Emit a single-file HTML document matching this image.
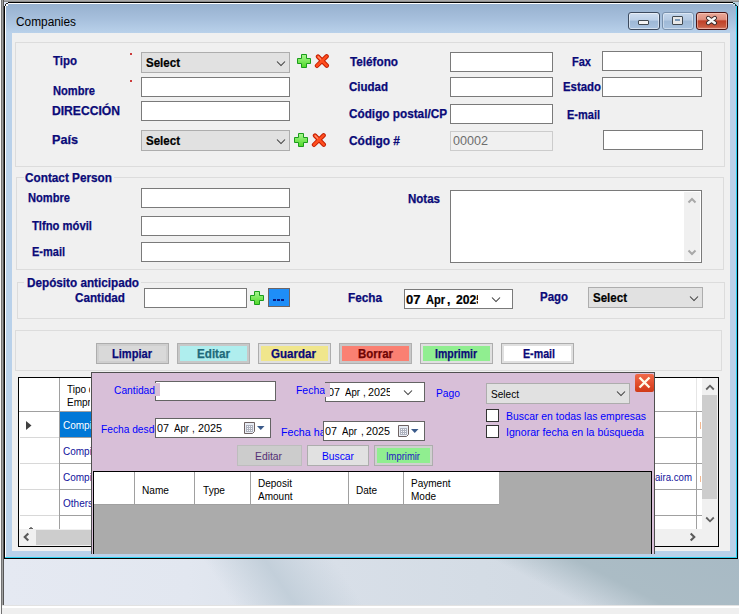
<!DOCTYPE html>
<html><head><meta charset="utf-8"><style>*{margin:0;padding:0;box-sizing:border-box}
html,body{width:739px;height:614px;overflow:hidden;position:relative;background:#efefef}
body div,body span,body svg{position:absolute}
span{white-space:nowrap;font-family:"Liberation Sans",sans-serif;font-size:12px;line-height:12px;transform-origin:0 0}
.lb{font-weight:bold;color:#0a0a78;-webkit-text-stroke:0.25px currentColor}
.cb{font-weight:bold;color:#000;-webkit-text-stroke:0.2px currentColor}
.dis{color:#6d6d6d}
.tt{color:#000}
.rg{color:#000;font-size:11.5px}
.bl{color:#12129c;font-size:11.5px}
.pb{color:#0000ff;font-size:11.5px}
</style></head><body>
<div style="left:4px;top:559px;width:735px;height:46px;background:linear-gradient(27deg,rgba(171,188,197,0) 0%,rgba(171,188,197,0) 70%,rgba(171,188,197,1) 80%,#a8bac5 100%),linear-gradient(56deg,rgba(192,205,216,0) 30%,rgba(192,205,216,.9) 38%,rgba(192,205,216,0) 47%),linear-gradient(90deg,#e5e9f2 0%,#e2e7f0 25%,#d8dfe8 45%,#d4dce5 65%,#cdd6df 100%)"></div>
<div style="left:2px;top:605px;width:737px;height:1px;background:#e2e2e2"></div>
<div style="left:2px;top:606px;width:737px;height:2px;background:#fff"></div>
<div style="left:0px;top:0px;width:1px;height:614px;background:#f8f8f8"></div>
<div style="left:1px;top:0px;width:1px;height:614px;background:#727272"></div>
<div style="left:2px;top:0px;width:1px;height:605px;background:#a0a0a0"></div>
<div style="left:3px;top:0px;width:1px;height:605px;background:#555"></div>
<div style="left:4px;top:0px;width:735px;height:1px;background:#a9a9a9"></div>
<div style="left:4px;top:1px;width:735px;height:1px;background:#8c8c8c"></div>
<div style="left:4px;top:2px;width:734px;height:557px;background:#000"></div>
<div style="left:5px;top:3px;width:732px;height:555px;background:#fff"></div>
<div style="left:6px;top:4px;width:731px;height:553px;background:#b9d1ea"></div>
<div style="left:736px;top:4px;width:1px;height:554px;background:#2ad0f0"></div>
<div style="left:5px;top:557px;width:732px;height:1px;background:#2ad0f0"></div>
<div style="left:6px;top:4px;width:730px;height:29px;background:linear-gradient(180deg,#97b1cf 0%,#a6bfdc 50%,#b9d1ea 100%)"></div>
<div style="left:738px;top:2px;width:1px;height:557px;background:#d5e2f2"></div>
<div style="left:733px;top:2px;width:6px;height:4px;background:#b9cfdf"></div>
<div style="left:733px;top:3px;width:2px;height:1px;background:#1a3a40"></div>
<div style="left:735px;top:4px;width:1px;height:2px;background:#1a3a40"></div>
<div style="left:734px;top:4px;width:1px;height:1px;background:#c8f0f8"></div>
<div style="left:736px;top:5px;width:1px;height:1px;background:#203838"></div>
<div style="left:737px;top:6px;width:1px;height:3px;background:#000"></div>
<div style="left:4px;top:2px;width:4px;height:4px;background:#dfe7f6"></div>
<div style="left:5px;top:4px;width:1px;height:2px;background:#222"></div>
<div style="left:6px;top:3px;width:2px;height:1px;background:#222"></div>
<div style="left:6px;top:4px;width:2px;height:2px;background:#ffffff"></div>
<div style="left:628px;top:12px;width:32px;height:18px;border:1px solid #3c4a5e;border-radius:3px;background:linear-gradient(180deg,#d0def0 0%,#bcd0e8 45%,#9db8d6 50%,#a9c3e0 100%);box-shadow:inset 0 0 0 1px rgba(255,255,255,.5)"></div>
<div style="left:638px;top:20px;width:11px;height:5px;background:#f4f4f4;border:1px solid #404850;border-radius:1px"></div>
<div style="left:662px;top:12px;width:32px;height:18px;border:1px solid #7890ac;border-radius:3px;background:linear-gradient(180deg,#c4d6ec 0%,#b4c9e2 45%,#9fb9d6 50%,#a9c3e0 100%);box-shadow:inset 0 0 0 1px rgba(255,255,255,.4)"></div>
<div style="left:672px;top:16px;width:11px;height:9px;background:#e8e8e8;border:1px solid #404850;border-radius:1px"></div>
<div style="left:675px;top:19px;width:5px;height:2px;background:#7a98b8;border:0"></div>
<div style="left:696px;top:12px;width:32px;height:18px;border:1px solid #4a1414;border-radius:3px;background:linear-gradient(180deg,#eaa898 0%,#e09080 40%,#c04028 50%,#c85a40 85%,#d88070 100%);box-shadow:inset 0 0 0 1px rgba(255,220,210,.5)"></div>
<svg style="left:705px;top:15px" width="13" height="11" viewBox="0 0 13 11"><path d="M3.2 3 L9.8 8 M9.8 3 L3.2 8" stroke="#3a2828" stroke-width="4.4" stroke-linecap="round"/><path d="M3.2 3 L9.8 8 M9.8 3 L3.2 8" stroke="#f8f8f8" stroke-width="2.6" stroke-linecap="round"/></svg>
<span id="t0" class="tt" style="left:16px;top:16px;transform:scaleX(0.9884);">Companies</span>
<div style="left:12px;top:33px;width:718px;height:518px;background:#f0f0f0"></div>
<div style="left:15px;top:42px;width:710px;height:125px;border:1px solid #dcdcdc"></div>
<div style="left:16px;top:177px;width:708px;height:93px;border:1px solid #dcdcdc"></div>
<div style="left:17px;top:282px;width:708px;height:37px;border:1px solid #dcdcdc"></div>
<div style="left:15px;top:330px;width:707px;height:41px;border:1px solid #dcdcdc"></div>
<div style="left:24px;top:172px;width:90px;height:12px;background:#f0f0f0"></div>
<div style="left:24px;top:276px;width:117px;height:12px;background:#f0f0f0"></div>
<div style="left:141px;top:52px;width:149px;height:21px;background:#e1e1e1;border:1px solid #adadad"></div>
<div style="left:141px;top:77px;width:149px;height:20px;background:#fff;border:1px solid #7a7a7a"></div>
<div style="left:141px;top:101px;width:149px;height:20px;background:#fff;border:1px solid #7a7a7a"></div>
<div style="left:141px;top:130px;width:149px;height:21px;background:#e1e1e1;border:1px solid #adadad"></div>
<div style="left:450px;top:52px;width:103px;height:20px;background:#fff;border:1px solid #7a7a7a"></div>
<div style="left:450px;top:77px;width:103px;height:20px;background:#fff;border:1px solid #7a7a7a"></div>
<div style="left:450px;top:104px;width:103px;height:20px;background:#fff;border:1px solid #7a7a7a"></div>
<div style="left:450px;top:131px;width:103px;height:20px;background:#f0f0f0;border:1px solid #cccccc"></div>
<div style="left:602px;top:51px;width:100px;height:20px;background:#fff;border:1px solid #7a7a7a"></div>
<div style="left:602px;top:77px;width:100px;height:20px;background:#fff;border:1px solid #7a7a7a"></div>
<div style="left:603px;top:130px;width:100px;height:20px;background:#fff;border:1px solid #7a7a7a"></div>
<div style="left:130px;top:53px;width:2px;height:2px;background:#c00000;border-radius:1px"></div>
<div style="left:130px;top:80px;width:2px;height:2px;background:#c00000;border-radius:1px"></div>
<div style="left:141px;top:188px;width:149px;height:20px;background:#fff;border:1px solid #7a7a7a"></div>
<div style="left:141px;top:216px;width:149px;height:20px;background:#fff;border:1px solid #7a7a7a"></div>
<div style="left:141px;top:242px;width:149px;height:20px;background:#fff;border:1px solid #7a7a7a"></div>
<div style="left:450px;top:190px;width:252px;height:73px;background:#fff;border:1px solid #7a7a7a"></div>
<div style="left:684px;top:192px;width:16px;height:69px;background:#f0f0f0"></div>
<div style="left:144px;top:288px;width:103px;height:20px;background:#fff;border:1px solid #7a7a7a"></div>
<div style="left:404px;top:289px;width:109px;height:20px;background:#fff;border:1px solid #7a7a7a"></div>
<div style="left:588px;top:287px;width:115px;height:21px;background:#e1e1e1;border:1px solid #adadad"></div>
<div style="left:96px;top:343px;width:73px;height:21px;background:#d9d9d9;border:1px solid #adadad;box-shadow:inset 0 0 0 2px #cfcfcf"></div>
<div style="left:177px;top:343px;width:73px;height:21px;background:#afeeee;border:1px solid #b0b0b0;box-shadow:inset 0 0 0 2px #c8c8c8"></div>
<div style="left:258px;top:343px;width:73px;height:21px;background:#f0e68c;border:1px solid #adadad;box-shadow:inset 0 0 0 2px #e0e0e0"></div>
<div style="left:339px;top:343px;width:73px;height:21px;background:#fa8072;border:1px solid #b0b0b0;box-shadow:inset 0 0 0 2px #c8c8c8"></div>
<div style="left:420px;top:343px;width:73px;height:21px;background:#90ee90;border:1px solid #adadad;box-shadow:inset 0 0 0 2px #e0e0e0"></div>
<div style="left:501px;top:343px;width:73px;height:21px;background:#ffffff;border:1px solid #adadad;box-shadow:inset 0 0 0 2px #e0e0e0"></div>
<svg style="left:275px;top:59px" width="12" height="9" viewBox="0 0 12 9"><path d="M2 2.5 L6 6.5 L10 2.5" fill="none" stroke="#383838" stroke-width="1.05"/></svg>
<svg style="left:275px;top:137px" width="12" height="9" viewBox="0 0 12 9"><path d="M2 2.5 L6 6.5 L10 2.5" fill="none" stroke="#383838" stroke-width="1.05"/></svg>
<svg style="left:688px;top:294px" width="12" height="9" viewBox="0 0 12 9"><path d="M2 2.5 L6 6.5 L10 2.5" fill="none" stroke="#383838" stroke-width="1.05"/></svg>
<svg style="left:490px;top:295px" width="12" height="9" viewBox="0 0 12 9"><path d="M2 2.5 L6 6.5 L10 2.5" fill="none" stroke="#383838" stroke-width="1.05"/></svg>
<svg style="left:297px;top:54px" width="14" height="14" viewBox="0 0 14 14"><defs><linearGradient id="pg297" x1="0" y1="0" x2="0" y2="1"><stop offset="0" stop-color="#a8f890"/><stop offset="1" stop-color="#50d828"/></linearGradient></defs><path d="M4.5 0.5 H9.5 V4.5 H13.5 V9.5 H9.5 V13.5 H4.5 V9.5 H0.5 V4.5 H4.5 Z" fill="url(#pg297)" stroke="#1c9c1c" stroke-width="1"/></svg>
<svg style="left:314px;top:54px" width="16" height="15" viewBox="0 0 16 15"><path d="M4 2.6 L12.8 11.6 M12.6 2.4 L3 11.8" stroke="#c01c00" stroke-width="4.4" stroke-linecap="round"/><path d="M4 2.6 L12.8 11.6 M12.6 2.4 L3 11.8" stroke="#ff4e1e" stroke-width="2.6" stroke-linecap="round"/><path d="M4.2 2.8 L6.5 5" stroke="#ff9070" stroke-width="1.2" stroke-linecap="round"/></svg>
<svg style="left:294px;top:133px" width="14" height="14" viewBox="0 0 14 14"><defs><linearGradient id="pg294" x1="0" y1="0" x2="0" y2="1"><stop offset="0" stop-color="#a8f890"/><stop offset="1" stop-color="#50d828"/></linearGradient></defs><path d="M4.5 0.5 H9.5 V4.5 H13.5 V9.5 H9.5 V13.5 H4.5 V9.5 H0.5 V4.5 H4.5 Z" fill="url(#pg294)" stroke="#1c9c1c" stroke-width="1"/></svg>
<svg style="left:311px;top:133px" width="16" height="15" viewBox="0 0 16 15"><path d="M4 2.6 L12.8 11.6 M12.6 2.4 L3 11.8" stroke="#c01c00" stroke-width="4.4" stroke-linecap="round"/><path d="M4 2.6 L12.8 11.6 M12.6 2.4 L3 11.8" stroke="#ff4e1e" stroke-width="2.6" stroke-linecap="round"/><path d="M4.2 2.8 L6.5 5" stroke="#ff9070" stroke-width="1.2" stroke-linecap="round"/></svg>
<svg style="left:250px;top:291px" width="14" height="14" viewBox="0 0 14 14"><defs><linearGradient id="pg250" x1="0" y1="0" x2="0" y2="1"><stop offset="0" stop-color="#a8f890"/><stop offset="1" stop-color="#50d828"/></linearGradient></defs><path d="M4.5 0.5 H9.5 V4.5 H13.5 V9.5 H9.5 V13.5 H4.5 V9.5 H0.5 V4.5 H4.5 Z" fill="url(#pg250)" stroke="#1c9c1c" stroke-width="1"/></svg>
<div style="left:268px;top:288px;width:22px;height:19px;background:#1e8ef8;border:1px solid #6e6464"></div>
<div style="left:273px;top:299px;width:3px;height:2px;background:#0a1a80"></div>
<div style="left:277px;top:299px;width:3px;height:2px;background:#0a1a80"></div>
<div style="left:281px;top:299px;width:3px;height:2px;background:#0a1a80"></div>
<svg style="left:686px;top:196px" width="12" height="9" viewBox="0 0 12 9"><path d="M2.5 6.5 L6 3 L9.5 6.5" fill="none" stroke="#a8a8a8" stroke-width="2"/></svg>
<svg style="left:686px;top:248px" width="12" height="9" viewBox="0 0 12 9"><path d="M2.5 2.5 L6 6 L9.5 2.5" fill="none" stroke="#a8a8a8" stroke-width="2"/></svg>
<span id="t1" class="lb" style="left:53px;top:55px;transform:scaleX(0.9558);">Tipo</span>
<span id="t2" class="lb" style="left:53px;top:85px;transform:scaleX(0.9263);">Nombre</span>
<span id="t3" class="lb" style="left:52px;top:105px;transform:scaleX(1.0097);">DIRECCIÓN</span>
<span id="t4" class="lb" style="left:52px;top:134px;transform:scaleX(1.0532);">País</span>
<span id="t5" class="lb" style="left:350px;top:56px;transform:scaleX(0.9774);">Teléfono</span>
<span id="t6" class="lb" style="left:349px;top:81px;transform:scaleX(0.9589);">Ciudad</span>
<span id="t7" class="lb" style="left:349px;top:108px;transform:scaleX(0.9800);">Código postal/CP</span>
<span id="t8" class="lb" style="left:349px;top:135px;transform:scaleX(0.9936);">Código #</span>
<span id="t9" class="lb" style="left:572px;top:56px;transform:scaleX(0.9184);">Fax</span>
<span id="t10" class="lb" style="left:563px;top:81px;transform:scaleX(0.9496);">Estado</span>
<span id="t11" class="lb" style="left:567px;top:109px;transform:scaleX(0.9163);">E-mail</span>
<span id="t12" class="cb" style="left:146px;top:57px;transform:scaleX(0.9616);">Select</span>
<span id="t13" class="cb" style="left:146px;top:135px;transform:scaleX(0.9616);">Select</span>
<span id="t14" class="dis" style="left:453px;top:135px;transform:scaleX(1.0487);">00002</span>
<span id="t15" class="lb" style="left:25px;top:172px;transform:scaleX(0.9810);">Contact Person</span>
<span id="t16" class="lb" style="left:28px;top:192px;transform:scaleX(0.9263);">Nombre</span>
<span id="t17" class="lb" style="left:32px;top:220px;transform:scaleX(0.9375);">Tlfno móvil</span>
<span id="t18" class="lb" style="left:32px;top:246px;transform:scaleX(0.9163);">E-mail</span>
<span id="t19" class="lb" style="left:408px;top:193px;transform:scaleX(0.9597);">Notas</span>
<span id="t20" class="lb" style="left:27px;top:277px;transform:scaleX(0.9766);">Depósito anticipado</span>
<span id="t21" class="lb" style="left:75px;top:292px;transform:scaleX(0.9738);">Cantidad</span>
<span id="t22" class="lb" style="left:348px;top:292px;transform:scaleX(0.9802);">Fecha</span>
<span id="t23" class="lb" style="left:540px;top:291px;transform:scaleX(0.9542);">Pago</span>
<span id="t24" class="cb" style="left:406px;top:294px;transform:scaleX(1.0854);">07</span>
<span id="t25" class="cb" style="left:426px;top:294px;transform:scaleX(0.9191);">Apr</span>
<span id="t26" class="cb" style="left:447px;top:294px;">,</span>
<div style="left:455px;top:290px;width:23px;height:20px;overflow:hidden"><span id="t27" class="cb" style="left:1px;top:4px;transform:scaleX(1.0111);">2025</span></div>
<span id="t28" class="cb" style="left:593px;top:292px;transform:scaleX(0.9616);">Select</span>
<span id="t29" class="lb" style="left:112px;top:348px;transform:scaleX(0.9229);">Limpiar</span>
<span id="t30" class="lb" style="left:197px;top:348px;transform:scaleX(0.9701);color:#1e6a7a">Editar</span>
<span id="t31" class="lb" style="left:271px;top:348px;transform:scaleX(0.9639);">Guardar</span>
<span id="t32" class="lb" style="left:358px;top:348px;transform:scaleX(0.9540);color:#700404">Borrar</span>
<span id="t33" class="lb" style="left:435px;top:348px;transform:scaleX(0.8747);">Imprimir</span>
<span id="t34" class="lb" style="left:523px;top:348px;transform:scaleX(0.8885);">E-mail</span>
<div style="left:18px;top:377px;width:701px;height:170px;background:#fff;border:1px solid #000"></div>
<div style="left:19px;top:411px;width:683px;height:1px;background:#a0a0a0"></div>
<div style="left:59px;top:378px;width:1px;height:151px;background:#a0a0a0"></div>
<div style="left:20px;top:437px;width:39px;height:1px;background:#d8d8d8"></div>
<div style="left:60px;top:437px;width:642px;height:1px;background:#a0a0a0"></div>
<div style="left:20px;top:463px;width:39px;height:1px;background:#d8d8d8"></div>
<div style="left:60px;top:463px;width:642px;height:1px;background:#a0a0a0"></div>
<div style="left:20px;top:489px;width:39px;height:1px;background:#d8d8d8"></div>
<div style="left:60px;top:489px;width:642px;height:1px;background:#a0a0a0"></div>
<div style="left:20px;top:515px;width:39px;height:1px;background:#d8d8d8"></div>
<div style="left:60px;top:515px;width:642px;height:1px;background:#a0a0a0"></div>
<div style="left:696px;top:378px;width:1px;height:33px;background:#e6e6e6"></div>
<div style="left:696px;top:412px;width:1px;height:117px;background:#a0a0a0"></div>
<div style="left:60px;top:412px;width:40px;height:25px;background:#0078d7"></div>
<svg style="left:25px;top:420px" width="8" height="11" viewBox="0 0 8 11"><path d="M1 1 L6.5 5.5 L1 10 Z" fill="#404040"/></svg>
<div style="left:702px;top:378px;width:16px;height:151px;background:#f0f0f0"></div>
<div style="left:702px;top:395px;width:15px;height:104px;background:#cdcdcd"></div>
<svg style="left:705px;top:382px" width="10" height="10" viewBox="0 0 10 10"><path d="M1.2 7.5 L5 3.7 L8.8 7.5" fill="none" stroke="#606060" stroke-width="1.8"/></svg>
<svg style="left:705px;top:515px" width="10" height="10" viewBox="0 0 10 10"><path d="M1.2 2.5 L5 6.3 L8.8 2.5" fill="none" stroke="#606060" stroke-width="1.8"/></svg>
<div style="left:19px;top:529px;width:699px;height:17px;background:#f0f0f0"></div>
<div style="left:36px;top:530px;width:200px;height:15px;background:#cdcdcd"></div>
<svg style="left:21px;top:532px" width="10" height="10" viewBox="0 0 10 10"><path d="M7.3 1.4 L3.7 5 L7.3 8.6" fill="none" stroke="#5a5a5a" stroke-width="2.1"/></svg>
<svg style="left:688px;top:532px" width="10" height="10" viewBox="0 0 10 10"><path d="M2.7 1.4 L6.3 5 L2.7 8.6" fill="none" stroke="#5a5a5a" stroke-width="2.1"/></svg>
<div style="left:30px;top:527px;width:2px;height:1px;background:#888"></div>
<div style="left:29px;top:528px;width:4px;height:1px;background:#666"></div>
<div style="left:700px;top:422px;width:1px;height:7px;background:#f4b890"></div>
<div style="left:700px;top:476px;width:1px;height:6px;background:#f4b890"></div>
<div style="left:62px;top:379px;width:28px;height:20px;overflow:hidden"><span id="t35" class="rg" style="left:5px;top:4px;transform:scaleX(0.8700);">Tipo de</span></div>
<div style="left:62px;top:392px;width:28px;height:20px;overflow:hidden"><span id="t36" class="rg" style="left:5px;top:4px;transform:scaleX(0.8700);">Empresa</span></div>
<span id="t37" class="rg" style="left:63px;top:419px;transform:scaleX(0.8700);color:#fff">Compiled</span>
<span id="t38" class="bl" style="left:63px;top:445px;transform:scaleX(0.8700);">Compiled</span>
<span id="t39" class="bl" style="left:63px;top:471px;transform:scaleX(0.8700);">Compiled</span>
<span id="t40" class="bl" style="left:63px;top:497px;transform:scaleX(0.8700);">Others</span>
<span id="t41" class="bl" style="left:655px;top:471px;transform:scaleX(0.8388);">aira.com</span>
<div style="left:91px;top:372px;width:564px;height:182px;background:#d8bfd8;border:1px solid #505050;border-bottom:0"></div>
<div style="left:635px;top:374px;width:19px;height:18px;background:linear-gradient(180deg,#f06a4a 0%,#e04a2a 60%,#d03a18 100%);border-radius:2px"></div>
<svg style="left:635px;top:374px" width="19" height="18" viewBox="0 0 19 18"><path d="M4.5 3.5 L14.5 13.5 M14.5 3.5 L4.5 13.5" stroke="#fffbe8" stroke-width="2.4"/></svg>
<div style="left:155px;top:381px;width:121px;height:20px;background:#fff;border:1px solid #646464"></div>
<div style="left:155px;top:383px;width:5px;height:13px;background:#d8bfd8"></div>
<div style="left:325px;top:382px;width:100px;height:20px;background:#fff;border:1px solid #646464"></div>
<svg style="left:402px;top:388px" width="12" height="9" viewBox="0 0 12 9"><path d="M2 2.5 L6 6.5 L10 2.5" fill="none" stroke="#383838" stroke-width="1.05"/></svg>
<div style="left:486px;top:383px;width:144px;height:21px;background:#e1e1e1;border:1px solid #adadad"></div>
<svg style="left:615px;top:389px" width="12" height="9" viewBox="0 0 12 9"><path d="M2 2.5 L6 6.5 L10 2.5" fill="none" stroke="#383838" stroke-width="1.05"/></svg>
<div style="left:486px;top:409px;width:13px;height:13px;background:#fff;border:1px solid #333"></div>
<div style="left:486px;top:425px;width:13px;height:13px;background:#fff;border:1px solid #333"></div>
<div style="left:155px;top:418px;width:116px;height:20px;background:#fff;border:1px solid #646464"></div>
<div style="left:323px;top:421px;width:102px;height:20px;background:#fff;border:1px solid #646464"></div>
<svg style="left:244px;top:422px" width="22" height="13" viewBox="0 0 22 13"><path d="M0.5 0.5 h10 v9 l-2 2 h-8 z" fill="#e8ecf4" stroke="#6e6262" stroke-width="1"/><rect x="2" y="3" width="7" height="7" fill="#aeb2be"/><rect x="3" y="4" width="1" height="1" fill="#f8f8fc"/><rect x="3" y="6" width="1" height="1" fill="#f8f8fc"/><rect x="3" y="8" width="1" height="1" fill="#f8f8fc"/><rect x="5" y="4" width="1" height="1" fill="#f8f8fc"/><rect x="5" y="6" width="1" height="1" fill="#f8f8fc"/><rect x="5" y="8" width="1" height="1" fill="#f8f8fc"/><rect x="7" y="4" width="1" height="1" fill="#f8f8fc"/><rect x="7" y="6" width="1" height="1" fill="#f8f8fc"/><rect x="7" y="8" width="1" height="1" fill="#f8f8fc"/><path d="M13 4 h7.5 l-3.75 4 z" fill="#3a5a8a"/></svg>
<svg style="left:398px;top:425px" width="22" height="13" viewBox="0 0 22 13"><path d="M0.5 0.5 h10 v9 l-2 2 h-8 z" fill="#e8ecf4" stroke="#6e6262" stroke-width="1"/><rect x="2" y="3" width="7" height="7" fill="#aeb2be"/><rect x="3" y="4" width="1" height="1" fill="#f8f8fc"/><rect x="3" y="6" width="1" height="1" fill="#f8f8fc"/><rect x="3" y="8" width="1" height="1" fill="#f8f8fc"/><rect x="5" y="4" width="1" height="1" fill="#f8f8fc"/><rect x="5" y="6" width="1" height="1" fill="#f8f8fc"/><rect x="5" y="8" width="1" height="1" fill="#f8f8fc"/><rect x="7" y="4" width="1" height="1" fill="#f8f8fc"/><rect x="7" y="6" width="1" height="1" fill="#f8f8fc"/><rect x="7" y="8" width="1" height="1" fill="#f8f8fc"/><path d="M13 4 h7.5 l-3.75 4 z" fill="#3a5a8a"/></svg>
<div style="left:237px;top:445px;width:65px;height:21px;background:#cccccc;border:1px solid #bdbdbd"></div>
<div style="left:307px;top:445px;width:62px;height:21px;background:#e1e1e1;border:1px solid #adadad"></div>
<div style="left:374px;top:445px;width:59px;height:21px;background:#90ee90;border:1px solid #adadad;box-shadow:inset 0 0 0 2px #d0d0d0"></div>
<div style="left:93px;top:471px;width:559px;height:83px;background:#ababab;border:1px solid #000;border-bottom:0"></div>
<div style="left:94px;top:472px;width:405px;height:33px;background:#fff"></div>
<div style="left:134px;top:472px;width:1px;height:33px;background:#a0a0a0"></div>
<div style="left:194px;top:472px;width:1px;height:33px;background:#a0a0a0"></div>
<div style="left:250px;top:472px;width:1px;height:33px;background:#a0a0a0"></div>
<div style="left:348px;top:472px;width:1px;height:33px;background:#a0a0a0"></div>
<div style="left:403px;top:472px;width:1px;height:33px;background:#a0a0a0"></div>
<div style="left:94px;top:504px;width:405px;height:1px;background:#a0a0a0"></div>
<span id="t42" class="pb" style="left:114px;top:384px;transform:scaleX(0.8904);">Cantidad</span>
<span id="t43" class="pb" style="left:296px;top:384px;transform:scaleX(0.9071);">Fecha</span>
<span id="t44" class="pb" style="left:436px;top:387px;transform:scaleX(0.8935);">Pago</span>
<div style="left:95px;top:419px;width:60px;height:20px;overflow:hidden"><span id="t45" class="pb" style="left:6px;top:4px;transform:scaleX(0.8872);">Fecha desde</span></div>
<div style="left:275px;top:422px;width:48px;height:20px;overflow:hidden"><span id="t46" class="pb" style="left:6px;top:4px;transform:scaleX(0.9321);">Fecha hasta</span></div>
<span id="t47" class="pb" style="left:506px;top:410px;transform:scaleX(0.9050);">Buscar en todas las empresas</span>
<span id="t48" class="pb" style="left:506px;top:426px;transform:scaleX(0.9223);">Ignorar fecha en la búsqueda</span>
<span id="t49" class="rg" style="left:157px;top:422px;transform:scaleX(0.9377);">07</span>
<span id="t50" class="rg" style="left:174px;top:422px;transform:scaleX(0.8377);">Apr</span>
<span id="t51" class="rg" style="left:192px;top:422px;transform:scaleX(0.8700);">,</span>
<span id="t52" class="rg" style="left:198px;top:422px;transform:scaleX(0.9377);">2025</span>
<span id="t53" class="rg" style="left:328px;top:386px;transform:scaleX(0.9377);">07</span>
<span id="t54" class="rg" style="left:345px;top:386px;transform:scaleX(0.8377);">Apr</span>
<span id="t55" class="rg" style="left:363px;top:386px;transform:scaleX(0.8700);">,</span>
<div style="left:366px;top:382px;width:24px;height:20px;overflow:hidden"><span id="t56" class="rg" style="left:2px;top:4px;transform:scaleX(0.9377);">2025</span></div>
<div style="left:325px;top:383px;width:5px;height:14px;background:#d8bfd8"></div>
<span id="t57" class="rg" style="left:325px;top:425px;transform:scaleX(0.9377);">07</span>
<span id="t58" class="rg" style="left:342px;top:425px;transform:scaleX(0.8377);">Apr</span>
<span id="t59" class="rg" style="left:361px;top:425px;transform:scaleX(0.8700);">,</span>
<span id="t60" class="rg" style="left:366px;top:425px;transform:scaleX(0.9377);">2025</span>
<span id="t61" class="rg" style="left:491px;top:388px;transform:scaleX(0.8759);">Select</span>
<span id="t62" class="rg" style="left:255px;top:450px;transform:scaleX(0.8986);color:#553075">Editar</span>
<span id="t63" class="pb" style="left:322px;top:450px;transform:scaleX(0.8939);">Buscar</span>
<span id="t64" class="pb" style="left:386px;top:450px;transform:scaleX(0.8187);color:#2020c0">Imprimir</span>
<span id="t65" class="rg" style="left:142px;top:484px;transform:scaleX(0.8798);">Name</span>
<span id="t66" class="rg" style="left:203px;top:484px;transform:scaleX(0.8822);">Type</span>
<span id="t67" class="rg" style="left:258px;top:477px;transform:scaleX(0.8700);">Deposit</span>
<span id="t68" class="rg" style="left:258px;top:490px;transform:scaleX(0.8700);">Amount</span>
<span id="t69" class="rg" style="left:356px;top:484px;transform:scaleX(0.8700);">Date</span>
<span id="t70" class="rg" style="left:411px;top:477px;transform:scaleX(0.8700);">Payment</span>
<span id="t71" class="rg" style="left:411px;top:490px;transform:scaleX(0.8700);">Mode</span>
</body></html>
